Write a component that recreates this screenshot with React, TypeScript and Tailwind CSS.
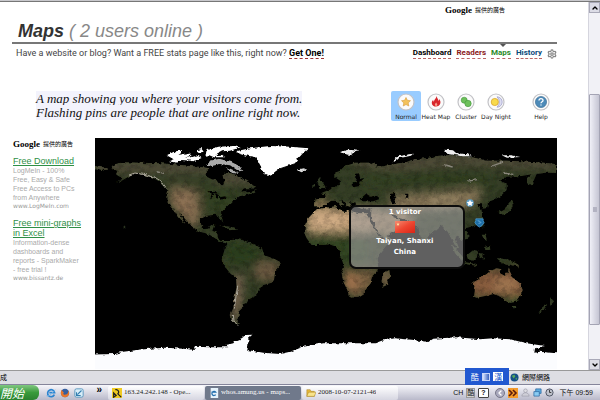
import type { ReactNode } from 'react'
import { ChevronDown, ChevronLeft, ChevronUp, Settings } from 'lucide-react'

const navLinks = [
  { label: 'Dashboard', className: 'text-black' },
  { label: 'Readers', className: 'text-[#8b1a1a]' },
  { label: 'Maps', className: 'text-[#2a8a2a]' },
  { label: 'History', className: 'text-[#0b4a7a]' },
]

const ads = [
  {
    title: ['Free Download'],
    lines: ['LogMeIn - 100%', 'Free, Easy & Safe', 'Free Access to PCs', 'from Anywhere'],
    site: 'www.LogMeIn.com',
  },
  {
    title: ['Free mini-graphs', 'in Excel'],
    lines: ['Information-dense', 'dashboards and', 'reports - SparkMaker', '- free trial !'],
    site: 'www.bissantz.de',
  },
]

const StarIcon = () => (
  <path d="M9 4.5l1.4 2.8 3.1.4-2.3 2.2.6 3.1L9 11.500l-2.800 1.500.6-3.100L4.500 7.700l3.100-.4z" fill="#f3c25a" stroke="#d79a3a" strokeWidth=".6" />
)

const FlameIcon = () => (
  <g>
    <path d="M9.500 3c.2 2 2 3 2 5 .5-.4.7-1.200.6-1.900 1.200 1.300 1.700 2.900 1.200 4.500-.6 2-2.200 3-4.300 3s-4-1.200-4.200-3.400c-.1-1.500.6-2.500 1.400-3.400 0 1 .2 1.500.7 1.900C7 6.500 9.300 5.500 9.500 3z" fill="#d8262c" />
    <path d="M9.200 9.500c-1 1-1.500 1.700-1.300 2.700.4 1 2 1 2.400 0 .3-1-.6-1.600-1.100-2.700z" fill="#f7a08c" />
  </g>
)

const ClusterIcon = () => (
  <g fill="#6cc05a" stroke="#43963c" strokeWidth=".6">
    <circle cx="7.200" cy="7.200" r="3" />
    <circle cx="11" cy="10.500" r="3.200" />
  </g>
)

const DayNightIcon = () => (
  <g>
    <path d="M10 3.800a5.200 5.200 0 010 10.400 7 7 0 000-10.400z" fill="#dcdcf0" stroke="#9a9ac8" strokeWidth=".7" />
    <circle cx="7.800" cy="9" r="3.600" fill="#f8da4c" stroke="#d8a42c" strokeWidth=".8" />
  </g>
)

const HelpIcon = () => (
  <g>
    <circle cx="9" cy="9" r="5.600" fill="#4d8ab8" stroke="#35688f" strokeWidth=".6" />
    <path d="M7 7.600c0-2.600 4-2.600 4-.2 0 1.400-2 1.400-2 2.900M9 11.400v1.200" fill="none" stroke="#fff" strokeWidth="1.300" />
  </g>
)

const ModeButton = ({ label, active, children }: { label: string; active?: boolean; children: ReactNode }) => (
  <button
    type="button"
    className={`flex w-[30px] flex-col items-center gap-[2px] rounded-[2px] pt-[2px] font-['DejaVu_Sans'] text-[6px] leading-[8px] whitespace-nowrap text-[#222] ${active ? 'bg-[#99ccff]' : ''}`}
  >
    <svg viewBox="0 0 18 18" className="size-[18px]" aria-hidden="true">
      <circle cx="9" cy="9" r="8" fill="#fbfbfb" stroke="#c2c2c6" strokeWidth="1.200" />
      {children}
    </svg>
    {label}
  </button>
)

const GoogleAds = () => (
  <div className="flex items-center gap-[3px] leading-[12px] text-black">
    <span className="font-['Liberation_Serif'] text-[9px] font-bold">Google</span>
    <span className="font-['Noto_Sans_CJK_TC',sans-serif] text-[6px]">提供的廣告</span>
  </div>
)

const WorldMap = () => (
  <svg viewBox="0 0 1386 693" className="block w-full bg-black" role="img" aria-label="World map">
    <defs>
      <filter id="rough" x="0" y="0" width="100%" height="100%" filterUnits="userSpaceOnUse">
        <feTurbulence type="fractalNoise" baseFrequency=".09" numOctaves="3" seed="4" result="n" />
        <feDisplacementMap in="SourceGraphic" in2="n" scale="11" xChannelSelector="R" yChannelSelector="G" />
      </filter>
      <filter id="soft" x="-30%" y="-30%" width="160%" height="160%">
        <feGaussianBlur stdDeviation="12" />
      </filter>
      <filter id="grain" x="0" y="0" width="100%" height="100%">
        <feTurbulence type="fractalNoise" baseFrequency=".045 .06" numOctaves="4" seed="9" />
        <feColorMatrix values="0 0 0 0 0  0 0 0 0 0  0 0 0 0 0  2.400 0 0 0 -.95" />
      </filter>
      <clipPath id="land">
        {/* North America */}
        <path d="M60 79L85 73 135 74 190 76 235 79 285 84 320 88 345 91 335 101 330 114 350 124 365 128 375 141 385 141 390 126 383 114 385 104 405 106 425 111 440 121 460 131 480 146 465 154 445 154 435 162 455 158 462 163 485 157 480 164 455 172 435 174 425 181 413 189 400 201 390 211 377 224 380 238 385 251 377 249 371 235 360 230 330 234 318 241 317 261 327 273 340 272 345 263 358 261 352 278 367 284 369 301 380 309 398 309 392 316 375 311 360 301 340 288 315 281 295 271 288 261 275 248 260 231 252 223 262 243 272 258 263 251 247 231 240 219 228 208 218 191 217 171 220 159 210 148 195 131 170 118 135 108 115 106 100 116 80 128 63 134 85 121 70 114 60 106 70 98 50 89z" />
        <path d="M0 81L25 86 38 94 18 99 0 94zM375 262L410 267 432 274 410 276zM86 262l6 5-6 5z" />
        {/* South America */}
        <path d="M395 309L417 302 445 306 475 319 500 331 505 346 515 354 540 364 557 373 553 386 540 401 537 426 530 434 505 441 495 456 480 474 473 481 460 486 455 496 440 501 443 509 430 521 435 531 425 546 435 558 423 559 410 548 407 528 415 511 417 486 425 446 423 421 405 406 390 386 380 366 385 348 390 331 397 319z" />
        {/* Africa */}
        <path d="M665 214L685 211 725 204 730 216 750 222 765 219 795 226 815 226 820 238 835 266 860 291 885 298 880 316 855 346 845 361 850 386 847 398 830 416 827 436 815 451 807 466 790 476 770 479 763 476 757 456 745 431 740 406 747 388 743 371 735 352 735 338 720 324 700 319 680 321 650 321 635 301 628 286 630 261 640 241 655 224zM863 406L883 396 885 411 875 441 865 446 860 431z" />
        {/* Europe and Asia */}
        <path d="M658 181L692 180 690 170 678 166 700 156 712 150 726 143 738 130 718 116 718 105 735 98 745 88 758 82 782 74 825 74 850 82 840 89 860 86 895 79 935 71 960 64 995 61 1025 54 1065 51 1125 56 1175 68 1235 68 1295 71 1345 74 1386 79 1386 105 1355 104 1325 108 1318 124 1310 142 1296 136 1296 120 1310 109 1280 114 1235 116 1215 131 1235 136 1235 156 1215 176 1195 186 1180 191 1176 211 1165 212 1160 196 1145 196 1160 216 1161 241 1145 262 1125 267 1105 272 1120 288 1120 302 1100 306 1089 296 1080 300 1092 330 1084 330 1068 300 1058 281 1039 262 1020 278 1000 292 991 317 980 310 970 270 945 248 912 240 900 230 885 222 895 238 912 244 920 258 900 280 866 298 850 280 828 240 830 210 800 212 780 205 783 194 765 190 770 206 757 204 745 190 730 182 745 200 740 206 722 188 705 188 692 198 682 206 665 208 657 200z" />
        <path d="M672 142L666 128 674 118 684 134 692 148 672 152zM652 142l12-5-2 10-10 3zM1210 222l18-10 14-14 8-14 6 10-10 24-20 14zM1158 262l8-6-2 16zM1160 290l12 0 4 18-8-3zM1170 326l14-3 2 12-12 2zM1115 352L1135 336 1148 338 1146 358 1135 368 1118 362zM1070 318L1088 338 1108 362 1100 368 1080 346zM1108 372l40 7-8 4-34-6zM1150 345l20 2-9 6 8 12-12-2zM1206 360L1235 364 1264 376 1272 388 1248 380 1230 380 1212 370z" />
        {/* Australia and New Zealand */}
        <path d="M1132 433L1155 421 1175 408 1190 396 1205 391 1220 394 1215 406 1230 414 1240 401 1240 388 1247 406 1255 421 1275 436 1283 456 1275 476 1265 491 1245 494 1230 488 1220 476 1195 468 1170 474 1145 479 1137 476 1140 456zM1252 504l12 0-6 10zM1365 478l12 12-12 14zM1360 496L1350 514 1330 526 1342 508z" />
      </clipPath>
    </defs>
    <g filter="url(#rough)">
      <g clipPath="url(#land)">
        <rect width="1386" height="693" fill="#343e25" />
        <g filter="url(#soft)">
          {/* tundra */}
          <path d="M0 70H360V108H0zM360 100H480V140H360zM740 60L1386 40V96L1100 84 900 100 800 90z" fill="#504c39" />
          {/* deserts and dry ranges */}
          <path d="M225 142L310 152 318 230 310 268 285 265 222 195z" fill="#7f694d" />
          <path d="M240 170L290 180 290 235 255 220z" fill="#8f7254" />
          <path d="M630 210H850L875 285H635z" fill="#c4a179" />
          <path d="M650 230H740V270H650z" fill="#d0ac84" />
          <path d="M830 215L940 222 960 262 880 300 840 270z" fill="#b3956f" />
          <path d="M880 170L1050 160 1150 150 1165 172 1120 210 1010 218 890 222z" fill="#857556" />
          <path d="M1010 185L1090 185 1090 204 1010 208z" fill="#a08c6b" />
          <path d="M658 181H700V206H658z" fill="#86704b" />
          <path d="M745 400L845 395 830 450 790 480 750 460z" fill="#7d6243" />
          <path d="M745 400L780 410 785 450 760 455z" fill="#a87650" />
          <path d="M490 370L560 370 545 430 500 430 470 410z" fill="#6b5840" />
          <path d="M415 410L445 410 440 500 420 560 405 540z" fill="#786450" />
          <path d="M1125 395H1290V475H1125z" fill="#875c3c" />
          <path d="M1195 420H1270V460H1200z" fill="#9e7450" />
          <path d="M855 395H890V450H855z" fill="#745f44" />
          {/* forests */}
          <path d="M640 297H820V325H640zM735 325H820V380H735z" fill="#314722" />
          <path d="M395 305L500 335 480 370 400 375z" fill="#293c1c" />
          <path d="M330 150H420V225H330z" fill="#323f22" />
          <path d="M800 105H1180V140H820z" fill="#333f22" />
          <path d="M1125 470H1150V485H1125zM1235 475H1280V500H1235z" fill="#42552d" />
        </g>
        <rect width="1386" height="693" filter="url(#grain)" opacity=".22" />
      </g>
      {/* inland waters */}
      <g fill="#000">
        <path d="M340 160L360 158 368 166 355 166 352 182 346 180 350 168zM362 166L372 172 368 182 360 178zM375 178l20-4-4 7-16 4z" />
        <path d="M795 184L812 168 825 176 850 170 852 184 835 190 805 190zM885 168L900 164 902 176 896 182 904 196 894 200 884 182zM930 167h10v12h-8z" />
        <path d="M770 140L785 126 782 108 792 106 796 122 808 120 800 128 792 144 776 148z" />
        <path d="M825 242L860 298 872 304 866 308 850 294z" />
      </g>
      {/* snow and ice */}
      <g fill="#fff">
        <path d="M430 38L465 31 525 24 585 26 640 31 625 44 610 61 600 76 575 84 555 91 540 101 530 111 523 114 510 108 500 96 497 81 490 68 475 56 445 51 425 45z" />
        <path d="M605 95l22-4 10 6-18 6z" fill="#ddd" />
        <path d="M215 52l25-12 22-2-8 12 30-6 8 9-22 5 28 2-8 8-30-2-14 8-26-4 16-6zM225 45l28-2-4 4zM280 60l26-8 14 8-20 8zM300 38l20-5 6 8-18 4zM335 36l36-10 44-2 22 4-32 10-26 2-22 12 24-2 10 8-34 0-14-6-12 2z" />
        <path d="M345 68l28-6 36 10 24 12 12 14-14 2-26-18-30-4-24 6-14-4zM395 88l20 8 14 12-22-4z" fill="#aaa" />
        <path d="M735 42l24-7 38 4-28 5 4 8-26-4zM892 69l16-14 46-8-6 6-36 8-14 10zM1048 35l26 2 10 9 34 3 14 6-28 0-48-8zM1220 52l30 0 26 5-40 2z" fill="#eee" />
      </g>
      <path d="M102 111L120 105 150 110 180 118 200 131 213 149M428 446L423 475 418 512M412 528L414 550 430 559" fill="none" stroke="#a9a498" strokeWidth="3" />
      <path d="M185 101l22 5M1045 80l28 7M1120 129l30-4M1225 105l30 4M1188 85l34-12" fill="none" stroke="#88857a" strokeWidth="4" />
      {/* Antarctica */}
      <path d="M-20 650L60 648 85 641 145 634 210 629 265 632 300 636 297 626 345 628 400 628 393 621 415 616 420 609 440 601 453 591 472 590 460 601 460 621 457 636 505 644 555 648 585 641 625 626 685 616 765 616 840 616 860 608 900 601 955 606 1000 612 1015 602 1085 598 1155 604 1195 601 1245 604 1295 616 1350 624 1320 631 1318 644 1335 641 1410 648V720H-20z" fill="#fbfcfe" />
    </g>
    <rect y="676" width="1386" height="17" fill="#fbfcfe" />
  </svg>
)

const VisitorMap = () => (
  <div className="relative min-w-0 flex-1">
    <WorldMap />
    <svg viewBox="0 0 12 12" className="absolute top-[26%] left-[80%] size-[10px]" aria-hidden="true">
      <circle cx="6" cy="6" r="4.500" fill="#5b9cc4" />
      <path d="M6 2l1.200 2.600 2.800.3-2 2 .5 2.800L6 8.300 3.500 9.700 4 6.900 2 4.900l2.800-.3z" fill="#fff" />
    </svg>
    <svg viewBox="0 0 12 12" className="absolute top-[34%] left-[82%] size-[11px]" aria-hidden="true">
      <path d="M2 2h8v2l1 2-2 3-3 2-3-2-2-3 1-2z" fill="#1f6ea6" stroke="#4ea3d8" strokeWidth=".8" />
      <path d="M4 4l3 1M5 7l3-1" stroke="#7ec1ea" strokeWidth=".8" />
    </svg>
    <div className="absolute top-[29%] right-[20%] left-[55%] flex h-[64px] flex-col items-center rounded-[7px] border-2 border-[#0c0c0c] bg-[#a0a0a0]/60 pr-[4px] font-['DejaVu_Sans'] text-[7px] leading-[11px] font-bold text-white">
      <div>1 visitor</div>
      <svg viewBox="0 0 20 12" className="my-[3px] h-[12px] w-[20px]" role="img" aria-label="China flag">
        <defs>
          <linearGradient id="flag" x1="0" x2="1" y1="0" y2="1">
            <stop offset="0" stopColor="#f58a70" />
            <stop offset=".5" stopColor="#ee4630" />
            <stop offset="1" stopColor="#d92416" />
          </linearGradient>
        </defs>
        <rect width="20" height="12" fill="url(#flag)" />
        <path d="M3 1.500l.5 1.200h1.300l-1 .8.4 1.200L3 4l-1.200.7.400-1.200-1-.8h1.300z" fill="#ffe0a0" />
      </svg>
      <div>Taiyan, Shanxi</div>
      <div>China</div>
    </div>
  </div>
)

const Sidebar = () => (
  <aside className="w-[82px] shrink-0 font-['Liberation_Sans'] whitespace-nowrap">
    <GoogleAds />
    {ads.map((ad) => (
      <div key={ad.site} className="pt-[6px] pb-[2px]">
        <a href="#" className="block text-[9px] leading-[10px] text-[#2f8f46] underline">
          {ad.title.map((line) => (
            <span key={line} className="block">{line}</span>
          ))}
        </a>
        <p className="text-[7px] leading-[9px] text-[#aaa]">
          {ad.lines.map((line) => (
            <span key={line} className="block">{line}</span>
          ))}
        </p>
        <div className="font-['DejaVu_Sans'] text-[6px] leading-[8px] text-[#999]">{ad.site}</div>
      </div>
    ))}
  </aside>
)

const Scrollbar = () => (
  <div className="flex w-[12px] shrink-0 flex-col border-l border-[#d5d5de] bg-[#f1f1f6]" aria-hidden="true">
    <div className="flex h-[11px] items-center justify-center border border-[#a9a9b8] bg-[#dcdce6]">
      <ChevronUp size={8} strokeWidth={4} />
    </div>
    <div className="flex-[81]" />
    <div className="flex flex-[230] items-center justify-center rounded-[1px] border border-[#a4a4b4] bg-linear-to-r from-[#f0f0f7] to-[#c5c5d3]">
      <div className="h-[5px] w-[4px] bg-[#b3b3c2]" />
    </div>
    <div className="flex-[34]" />
    <div className="flex h-[11px] items-center justify-center border border-[#a9a9b8] bg-[#dcdce6]">
      <ChevronDown size={8} strokeWidth={4} />
    </div>
  </div>
)

const StatusBar = () => (
  <div className="relative flex h-[14px] shrink-0 items-center border-t border-[#999] bg-[#dedee3] font-['Noto_Sans_CJK_TC',sans-serif] text-[7px] text-black">
    <span className="flex-1">成</span>
    <div className="flex w-[90px] items-center gap-[3px]">
      <svg viewBox="0 0 10 10" className="size-[9px]" aria-hidden="true">
        <circle cx="5" cy="5" r="4.500" fill="#164f86" />
        <path d="M2 3l3-1 1 2-2 2zM6 6l2-1-1 3z" fill="#56a95a" />
      </svg>
      <span>網際網路</span>
    </div>
    <div className="absolute right-[91px] bottom-[-1px] flex h-[17px] w-[44px] items-center justify-around bg-[#2158d0] px-1 text-[8px] text-white">
      <span>酷</span>
      <span className="h-[8px] w-[8px] border border-[#c8d5f8] bg-linear-to-r from-[#dbe4ff] to-[#3960bd]" />
      <span className="bg-white px-px leading-[9px] text-[#2158d0]">漢</span>
    </div>
  </div>
)

const BrowserIcon = () => (
  <svg viewBox="0 0 12 12" className="size-[10px] shrink-0" aria-hidden="true">
    <path d="M10 8a4.200 4.200 0 11.3-2.500H4" fill="none" stroke="#2b84d0" strokeWidth="2" />
    <path d="M1 9C0 12 8 7 11 2" fill="none" stroke="#7abdee" strokeWidth="1" />
  </svg>
)

const TaskButton = ({ label, active, children }: { label: string; active?: boolean; children: ReactNode }) => (
  <button
    type="button"
    className={`flex h-[14px] w-[96px] min-w-0 items-center gap-[2px] rounded-[2px] px-[4px] font-['Liberation_Serif'] text-[7px] whitespace-nowrap ${active ? 'bg-[#70798b] text-white' : 'bg-linear-to-b from-white to-[#d6d6e1] text-[#222]'}`}
  >
    {children}
    <span className="truncate">{label}</span>
  </button>
)

const Taskbar = () => (
  <div className="flex h-[16px] shrink-0 items-center border-t border-[#85859a] bg-linear-to-b from-[#f7f7fb] to-[#b9b9ca]">
    <button
      type="button"
      className="h-full w-[39px] shrink-0 rounded-r-[6px] bg-linear-to-b from-[#80c880] via-[#399b3c] to-[#2b8230] text-left font-['Noto_Sans_CJK_TC',sans-serif] text-[12px] leading-[14px] text-white italic"
    >
      開始
    </button>
    <div className="flex w-[69px] shrink-0 items-center gap-[4px] pl-[7px]">
      <BrowserIcon />
      <svg viewBox="0 0 12 12" className="size-[10px]" aria-hidden="true">
        <circle cx="6" cy="6" r="5" fill="#365f9f" />
        <path d="M2 2C0 6 1 11 6 11s6-5 4-8c0 4-2 5-4 5S3 6 5 5C3 5 3 3 2 2z" fill="#e7762c" />
      </svg>
      <svg viewBox="0 0 12 12" className="size-[10px]" aria-hidden="true">
        <rect x="1" y="1" width="10" height="10" rx="2" fill="#d8edf8" stroke="#4c8eb8" />
        <path d="M4 8l5-5M3 5v4h5" fill="none" stroke="#327daf" strokeWidth="1.300" />
      </svg>
      <span className="ml-auto pr-[6px] pb-[5px] text-[10px] leading-[10px] font-bold">»</span>
    </div>
    <div className="flex min-w-0 flex-1 gap-[1px]">
      <TaskButton label="163.24.242.148 - Ope...">
        <svg viewBox="0 0 12 12" className="size-[10px] shrink-0" aria-hidden="true">
          <rect width="12" height="12" fill="#efca22" />
          <path d="M4 2a3 3 0 013 5l4 4M2 6l3 3-3 2z" stroke="#222" strokeWidth="1.500" fill="none" />
        </svg>
      </TaskButton>
      <TaskButton label="whos.amung.us - maps..." active>
        <svg viewBox="0 0 12 12" className="size-[10px] shrink-0" aria-hidden="true">
          <rect x="2" width="9" height="12" fill="#e7f3fb" />
          <path d="M8 8a2.500 2.500 0 110-3H3" fill="none" stroke="#246fae" strokeWidth="1.500" />
        </svg>
      </TaskButton>
      <TaskButton label="2008-10-07-2121-46">
        <svg viewBox="0 0 12 12" className="size-[10px] shrink-0" aria-hidden="true">
          <path d="M1 10V2h4l1 2h4v6z" fill="#e6b83a" stroke="#a98222" strokeWidth=".6" />
          <path d="M1 10l2-5h9l-2 5z" fill="#f9e48a" stroke="#a98222" strokeWidth=".6" />
        </svg>
      </TaskButton>
    </div>
    <div className="flex shrink-0 items-center gap-[3px] pr-[7px] font-['Liberation_Sans','Noto_Sans_CJK_TC',sans-serif] text-[7px] leading-[10px] text-[#111]">
      <span>CH</span>
      <span className="border border-[#999] bg-[#d5d5d5] text-[7px] leading-[8px]">酷</span>
      <span className="rounded-[1px] border border-[#444] bg-white px-[2px] leading-[8px] font-bold">?</span>
      <span className="ml-[3px] flex size-[10px] items-center justify-center rounded-full border border-[#77778a] bg-[#a9a9bd] text-white">
        <ChevronLeft size={8} strokeWidth={4} />
      </span>
      <svg viewBox="0 0 10 10" className="size-[10px]" aria-hidden="true">
        <rect width="10" height="10" fill="#f49a29" />
        <path d="M1 2l3 3-3 3M5 2l3 3-3 3" fill="none" stroke="#5b1c0c" strokeWidth="1.600" />
      </svg>
      <svg viewBox="0 0 10 10" className="size-[9px]" aria-hidden="true">
        <circle cx="5" cy="3" r="2" fill="#dcdce2" stroke="#90909c" strokeWidth=".6" />
        <path d="M1 9c0-5 8-5 8 0z" fill="#cfcfd8" stroke="#90909c" strokeWidth=".6" />
      </svg>
      <svg viewBox="0 0 10 10" className="size-[9px]" aria-hidden="true">
        <path d="M3 1h6v5H3z" fill="#5eaee0" stroke="#29669f" strokeWidth=".8" />
        <path d="M1 4h6v5H1z" fill="#8acbf2" stroke="#29669f" strokeWidth=".8" />
      </svg>
      <svg viewBox="0 0 10 10" className="size-[9px]" aria-hidden="true">
        <circle cx="5" cy="5" r="4" fill="#bfc2cc" stroke="#454c5c" />
        <path d="M5 2v3h2" fill="none" stroke="#333" />
      </svg>
      <span className="ml-[3px]">下午 09:59</span>
    </div>
  </div>
)

const App = () => {
  return (
    <div className="flex h-screen flex-col overflow-hidden bg-white font-['Liberation_Sans',sans-serif]">
      <div className="h-[2px] shrink-0 border-b border-[#777] bg-[#c8c8cc]" />
      <div className="flex min-h-0 flex-1">
        <main className="min-w-0 flex-1 overflow-hidden pr-[31px] pl-[12px]">
          <div className="flex justify-end pt-[2px] pr-[52px]">
            <GoogleAds />
          </div>

          <h1 className="relative mt-[5px] border-b-2 border-[#777] pl-[6px] text-[18px] leading-[21px] font-bold text-[#333] italic">
            Maps <span className="font-normal text-[#888]">( 2 users online )</span>
            <span className="absolute right-[51px] bottom-[-5px] border-x-[3px] border-t-[3px] border-x-transparent border-t-[#555]" />
          </h1>

          <div className="flex items-end justify-between pt-[4px] pl-[4px] font-['Roboto'] text-[9px] leading-[11px] text-[#444]">
            <p>
              Have a website or blog? Want a FREE stats page like this, right now?{' '}
              <a href="#" className="border-b border-dashed border-[#933] font-bold text-black">Get One!</a>
            </p>
            <nav className="flex items-center gap-[5px] text-[8px] leading-[10px] font-bold">
              {navLinks.map((link) => (
                <a key={link.label} href="#" className={`border-b border-dashed border-[#b66] ${link.className}`}>
                  {link.label}
                </a>
              ))}
              <Settings size={10} className="text-[#888]" strokeWidth={3} />
            </nav>
          </div>

          <div className="flex items-start justify-between pt-[32px] pr-[1px] pl-[24px]">
            <p className="pt-px font-['Liberation_Serif'] text-[13px] leading-[14px] text-[#111] italic">
              <span className="bg-[#f3f3fc]">A map showing you where your visitors come from.</span>
              <br />
              <span className="bg-[#f3f3fc]">Flashing pins are people that are online right now.</span>
            </p>
            <div className="flex">
              <ModeButton label="Normal" active><StarIcon /></ModeButton>
              <ModeButton label="Heat Map"><FlameIcon /></ModeButton>
              <ModeButton label="Cluster"><ClusterIcon /></ModeButton>
              <ModeButton label="Day Night"><DayNightIcon /></ModeButton>
              <div className="ml-[15px]">
                <ModeButton label="Help"><HelpIcon /></ModeButton>
              </div>
            </div>
          </div>

          <div className="flex items-start pt-[17px] pl-[1px]">
            <Sidebar />
            <VisitorMap />
          </div>
        </main>
        <Scrollbar />
      </div>
      <StatusBar />
      <Taskbar />
    </div>
  )
}

export default App
